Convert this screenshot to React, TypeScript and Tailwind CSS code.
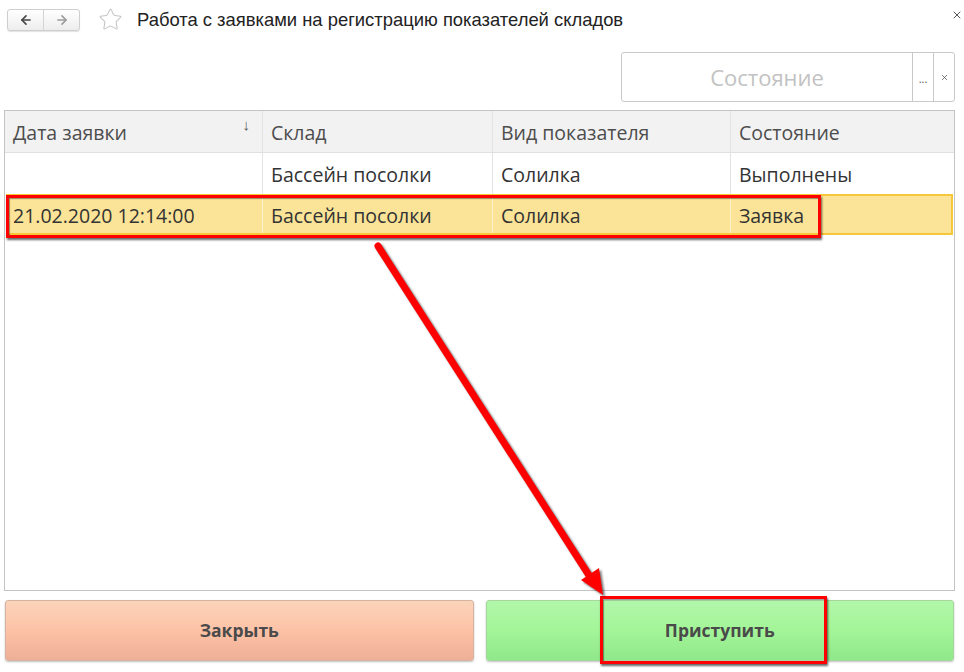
import { ArrowLeft, ArrowRight, Star, X } from 'lucide-react'

const cols = ['w-[258px]', 'w-[230px]', 'w-[238px]', 'flex-1']

function Cell({ i, children, last }: { i: number; children?: React.ReactNode; last?: boolean }) {
  return (
    <div
      className={`${cols[i]} h-full flex items-center px-[8px] pt-[2px] ${last ? '' : 'border-r border-[#e3e3e3]'}`}
    >
      {children}
    </div>
  )
}

export default function App() {
  return (
    <div className="relative w-[964px] h-[672px] bg-white flex flex-col overflow-hidden font-['Open_Sans',sans-serif] text-[#333]">
      {/* title bar */}
      <div className="h-[38px] flex items-center pl-[7px] pr-[1px] pt-[1px]">
        <div className="flex h-[22px] w-[73px] rounded-[3px] border border-[#cfcfcf] bg-gradient-to-b from-white to-[#ededed] shadow-[0_1px_1px_rgba(0,0,0,0.12)]">
          <div className="flex-1 flex items-center justify-center border-r border-[#d4d4d4]">
            <ArrowLeft className="w-[14px] h-[14px] text-[#444]" strokeWidth={2.8} />
          </div>
          <div className="flex-1 flex items-center justify-center">
            <ArrowRight className="w-[14px] h-[14px] text-[#9a9a9a]" strokeWidth={2.8} />
          </div>
        </div>
        <Star className="ml-[18px] w-[25px] h-[25px] text-[#c4c4c4]" strokeWidth={1} />
        <div className="ml-[14px] text-[18.4px] text-[#222] font-['Liberation_Sans',Arial,sans-serif]">
          Работа с заявками на регистрацию показателей складов
        </div>
        <div className="flex-1" />
        <X className="w-[12px] h-[12px] text-[#555] -mt-[10px]" strokeWidth={2} />
      </div>

      {/* filter */}
      <div className="flex justify-end pr-[9px] mt-[14px]">
        <div className="flex h-[50px] w-[334px] border border-[#c9c9c9] rounded-[3px]">
          <div className="flex-1 flex items-center justify-center text-[22px] text-[#c2c2c2]">Состояние</div>
          <div className="w-[21px] border-l border-[#c9c9c9] flex items-center justify-center text-[11px] text-[#555] pt-[4px]">
            ...
          </div>
          <div className="w-[21px] border-l border-[#c9c9c9] flex items-center justify-center">
            <X className="w-[9px] h-[9px] text-[#555]" strokeWidth={2} />
          </div>
        </div>
      </div>

      {/* table */}
      <div className="ml-[4px] w-[951px] h-[481px] mt-[8px] border border-[#c4c4c4] flex flex-col text-[19.5px]">
        <div className="h-[42px] flex bg-[#f2f2f2] border-b border-[#e0e0e0] text-[#4d4d4d]">
          <Cell i={0}>
            <span className="flex-1">Дата заявки</span>
            <span className="text-[15px] -mt-[16px] mr-[4px] text-[#555]">↓</span>
          </Cell>
          <Cell i={1}>Склад</Cell>
          <Cell i={2}>Вид показателя</Cell>
          <Cell i={3} last>Состояние</Cell>
        </div>
        <div className="h-[42px] flex">
          <Cell i={0} />
          <Cell i={1}>Бассейн посолки</Cell>
          <Cell i={2}>Солилка</Cell>
          <Cell i={3} last>Выполнены</Cell>
        </div>
        <div className="h-[41px] flex bg-[#fbe497] border-2 border-[#f7c73a] mx-[1px] -mt-[1px] pt-[2px]">
          <div className="w-[255px] h-full flex items-center px-[5px] border-r border-[#fff3c8]">21.02.2020 12:14:00</div>
          <div className="w-[230px] h-full flex items-center px-[8px] border-r border-[#fff3c8]">Бассейн посолки</div>
          <div className="w-[238px] h-full flex items-center px-[8px] border-r border-[#fff3c8]">Солилка</div>
          <div className="flex-1 h-full flex items-center px-[8px]">Заявка</div>
        </div>
      </div>

      {/* buttons */}
      <div className="flex gap-[12px] pl-[5px] pr-[10px] mt-[9px]">
        <button className="flex-1 h-[61px] rounded-[3px] border border-[#d6b3a0] bg-gradient-to-b from-[#fad4ba] via-[#fdc2a6] to-[#eeaf97] shadow-[0_1px_2px_rgba(0,0,0,0.25)] text-[17.5px] font-bold text-[#4a4a4a]">
          Закрыть
        </button>
        <button className="flex-1 h-[61px] rounded-[3px] border border-[#a6d69e] bg-gradient-to-b from-[#b2f7aa] via-[#a3f598] to-[#8fe889] shadow-[0_1px_2px_rgba(0,0,0,0.25)] text-[17.5px] font-bold text-[#4a4a4a]">
          Приступить
        </button>
      </div>

      {/* annotations */}
      <div className="absolute left-[6px] top-[195px] w-[815px] h-[43px] border-[3px] border-[#ff0000] shadow-[1px_2px_2px_rgba(0,0,0,0.6),inset_1px_1px_1px_rgba(0,0,0,0.4)]" />
      <div className="absolute left-[600px] top-[596px] w-[227px] h-[68px] border-[3px] border-[#ff0000] shadow-[1px_2px_2px_rgba(0,0,0,0.6),inset_1px_1px_1px_rgba(0,0,0,0.4)]" />
      <svg
        className="absolute left-0 top-0 pointer-events-none drop-shadow-[2px_2px_1px_rgba(0,0,0,0.55)]"
        width={964}
        height={672}
      >
        <line x1={378} y1={246} x2={592} y2={580} stroke="#ff0000" strokeWidth={7} strokeLinecap="round" />
        <polygon points="603,595 599,568 581,580" fill="#ff0000" />
      </svg>
    </div>
  )
}
